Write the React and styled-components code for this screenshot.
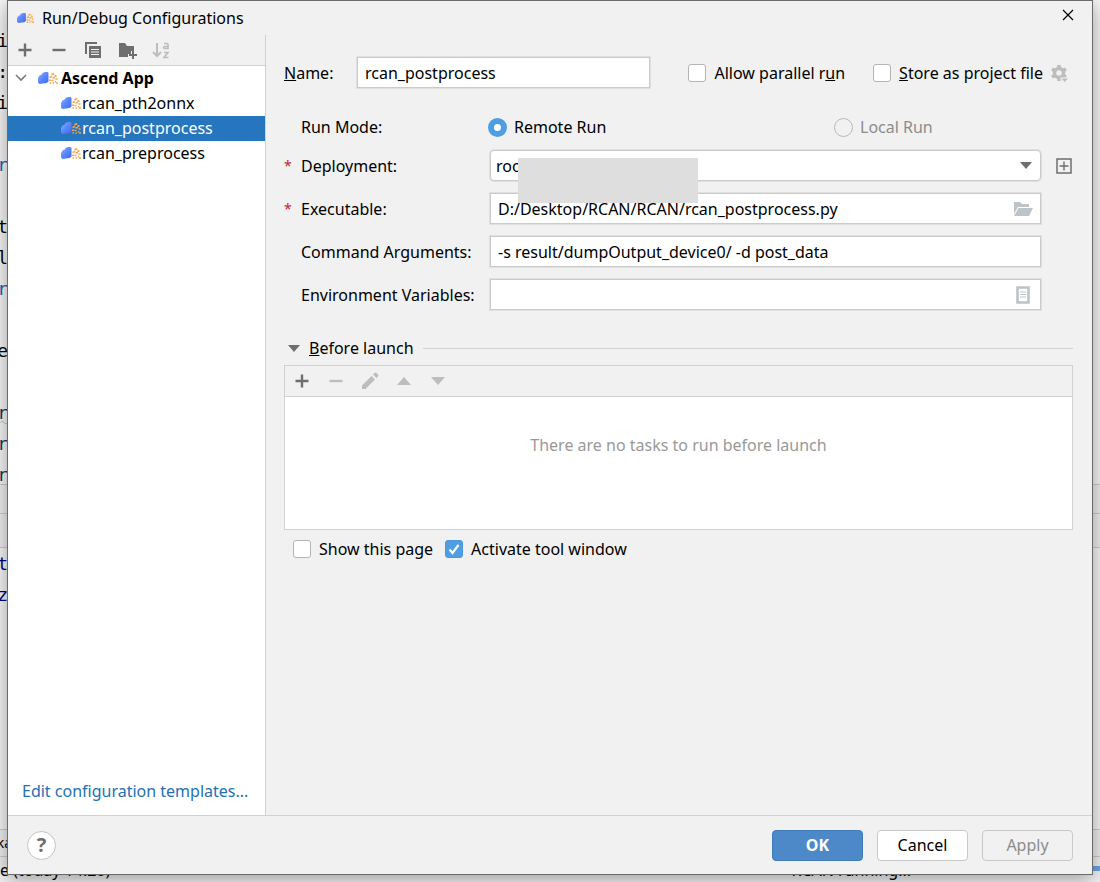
import React, { useState } from "react";
import styled, { createGlobalStyle, css } from "styled-components";

const GlobalStyle = createGlobalStyle`
  * {
    box-sizing: border-box;
  }

  body {
    margin: 0;
    background: #ffffff;
    color: #000000;
    font-family: "Noto Sans", "Open Sans", sans-serif;
    font-size: 16px;
    line-height: 22px;
  }

  button,
  input,
  select {
    font: inherit;
    color: inherit;
  }
`;

// Editor behind the dialog
const Page = styled.div`
  position: relative;
  display: flex;
  min-height: 100vh;
  padding: 0 7px 7px;
  overflow: hidden;
`;

const Backdrop = styled.div`
  position: absolute;
  inset: 0;
  display: flex;
  flex-direction: column;
  background: #fafafa;
  overflow: hidden;
`;

const CodeArea = styled.div`
  flex: none;
  height: ${(p) => p.$height}px;
  padding-top: ${(p) => p.$top || 0}px;
  overflow: hidden;
`;

const CodeLine = styled.div`
  display: flex;
  justify-content: flex-end;
  width: 8px;
  height: 31px;
  line-height: 31px;
  font-family: "DejaVu Sans Mono", monospace;
  font-size: 18px;
  color: ${(p) => p.$color};
  text-decoration: ${(p) => (p.$typo ? "underline wavy 1px #a5cfa5" : "none")};
`;

const Strip = styled.div`
  flex: none;
  height: ${(p) => p.$height}px;
  border-top: 1px solid #cfcfcf;
  background: #f2f2f2;
`;

const Filler = styled.div`
  flex: 1;
`;

const Crumb = styled.div`
  display: flex;
  justify-content: flex-end;
  width: 12px;
  font-size: 14px;
  line-height: 26px;
`;

const StatusBar = styled(Strip)`
  display: flex;
  line-height: 27px;
`;

const Progress = styled.span`
  width: 180px;
  height: 5px;
  margin: 9px 0 0 9px;
  background: #64a6e3;
`;

// Dialog frame
const Dialog = styled.div`
  position: relative;
  flex: 1;
  display: flex;
  flex-direction: column;
  border: 1px solid #6b6b6b;
  background: #f1f1f1;
  box-shadow: 0 3px 20px rgba(0, 0, 0, 0.4);
`;

const TitleBar = styled.header`
  display: flex;
  align-items: center;
  gap: 8px;
  height: 34px;
  padding: 0 16px 0 9px;
`;

const Title = styled.h1`
  flex: 1;
  margin: 0;
  font-size: 16px;
  font-weight: 400;
`;

const IconButton = styled.button`
  display: flex;
  align-items: center;
  justify-content: center;
  width: ${(p) => p.$width || 34}px;
  height: 30px;
  padding: 0;
  border: none;
  background: none;
  color: #6e6e6e;

  &:disabled {
    color: #bdbdbd;
  }
`;

const CloseButton = styled(IconButton)`
  align-self: flex-start;
  height: 28px;
`;

const EndButton = styled(IconButton)`
  justify-self: end;
`;

const Body = styled.div`
  flex: 1;
  display: flex;
`;

// Left side
const Sidebar = styled.aside`
  display: flex;
  flex-direction: column;
  width: 258px;
  border-right: 1px solid #d1d1d1;
  background: #ffffff;
`;

const Toolbar = styled.div`
  display: flex;
  align-items: center;
  height: 31px;
  border-bottom: 1px solid #d1d1d1;
  background: #f1f1f1;
`;

const Tree = styled.ul`
  flex: 1;
  margin: 0;
  padding: 0;
  list-style: none;
`;

const TreeItem = styled.li`
  display: flex;
  align-items: center;
  gap: ${(p) => (p.$root ? 3 : 1)}px;
  height: 25px;
  padding: 0 0 2px ${(p) => (p.$root ? 7 : 53)}px;
  font-weight: ${(p) => (p.$root ? 700 : 400)};
  ${(p) =>
    p.$selected &&
    css`
      background: #2675bf;
      color: #ffffff;
    `}
`;

const Chevron = styled.svg`
  margin-right: 8px;
`;

const TemplatesLink = styled.a`
  margin: 0 0 13px 14px;
  color: #2470b3;
  text-decoration: none;
`;

// Right side
const Content = styled.main`
  flex: 1;
  padding: 22px 19px 0 18px;
`;

const TopRow = styled.div`
  display: flex;
  align-items: center;
`;

const NameLabel = styled.label`
  width: 73px;
`;

const Spacer = styled.div`
  flex: 1;
`;

const TextInput = styled.input`
  width: ${(p) => p.$width || "100%"};
  height: 31px;
  padding: 0 7px;
  border: 1px solid #cbcbcb;
  box-shadow: 0 0 0 1px #e0e0e0;
  background: #ffffff;
  outline: none;
`;

const Check = styled.label`
  position: relative;
  display: flex;
  align-items: center;
  gap: 8px;
  margin-right: ${(p) => p.$after || 0}px;
`;

const CheckBox = styled.input`
  appearance: none;
  width: 18px;
  height: 18px;
  margin: 0;
  border: 1px solid #b4b4b4;
  border-radius: 3px;
  background: #ffffff;

  &:checked {
    border-color: #4a98dd;
    background: #4f9ee3;
  }
`;

const Tick = styled.svg`
  position: absolute;
  left: 3px;
  top: 5px;
  pointer-events: none;
`;

const Form = styled.div`
  display: grid;
  grid-template-columns: 17px 189px 1fr 32px;
  align-items: center;
  row-gap: 12px;
  margin-top: 28px;
`;

const Star = styled.span`
  color: #c7222d;
  font-size: 14px;
`;

const FormLabel = styled.label`
  grid-column: 2;
`;

const RadioRow = styled.div`
  display: grid;
  grid-template-columns: 346px 1fr;
  align-items: center;
`;

const RadioLabel = styled.label`
  display: flex;
  align-items: center;
  gap: 7px;
  color: ${(p) => (p.$off ? "#8c8c8c" : "#000000")};
`;

const Radio = styled.input`
  appearance: none;
  width: 19px;
  height: 19px;
  margin: 0 0 0 -2px;
  border: 1px solid #b9b9b9;
  border-radius: 50%;

  &:checked {
    border: 6px solid #4f9ee3;
    background: #ffffff;
  }
`;

const Field = styled.div`
  position: relative;
  display: flex;
  align-items: center;
`;

const FieldIcon = styled.span`
  position: absolute;
  right: ${(p) => p.$right}px;
  display: flex;
  color: #bdc3c7;
  pointer-events: none;
`;

const Select = styled.select`
  appearance: none;
  width: 100%;
  height: 31px;
  padding: 0 5px;
  border: 1px solid #cbcbcb;
  border-radius: 4px;
  box-shadow: 0 0 0 1px #e0e0e0;
  background: #ffffff;
  outline: none;
`;

const Mask = styled.div`
  position: absolute;
  z-index: 1;
  left: 28px;
  top: 8px;
  width: 180px;
  height: 45px;
  background: #dedede;
`;

const SectionHead = styled.div`
  display: flex;
  align-items: center;
  gap: 9px;
  margin-top: 27px;
  padding-left: 4px;
`;

const Rule = styled.div`
  flex: 1;
  height: 1px;
  background: #d1d1d1;
`;

const TaskPanel = styled.section`
  margin-top: 6px;
  border: 1px solid #d1d1d1;
`;

const EmptyTasks = styled.div`
  height: 132px;
  padding-top: 37px;
  background: #ffffff;
  color: #999999;
  text-align: center;
`;

const Options = styled.div`
  display: flex;
  margin-top: 8px;
  padding-left: 9px;
`;

const Footer = styled.footer`
  display: flex;
  align-items: center;
  gap: 14px;
  height: 59px;
  padding: 0 19px;
  border-top: 1px solid #d1d1d1;
`;

const HelpButton = styled.button`
  width: 29px;
  height: 29px;
  padding: 0;
  border: 1px solid #c4c4c4;
  border-radius: 50%;
  background: #ffffff;
  color: #6e6e6e;
  font-size: 20px;
  font-weight: 700;
  line-height: 26px;
`;

const DialogButton = styled.button`
  width: 91px;
  height: 31px;
  padding: 0;
  border: 1px solid #c8c8c8;
  border-radius: 4px;
  background: #ffffff;

  ${(p) =>
    p.$primary &&
    css`
      border-color: #4079b8;
      background: #4d89c9;
      color: #ffffff;
      font-weight: 700;
    `}

  &:disabled {
    background: #f1f1f1;
    color: #8c8c8c;
  }
`;

const AscendIcon = ({ width = 20 }) => (
  <svg width={width} height="12" viewBox="0 0 20 12">
    <defs>
      <linearGradient id="ascend" x1="0" y1="0" x2="1" y2="1">
        <stop offset="0" stopColor="#8fb0ff" />
        <stop offset="0.5" stopColor="#5a86fb" />
        <stop offset="1" stopColor="#3a6cf4" />
      </linearGradient>
    </defs>
    <path d="M0 10.500V6L1.500 3.500l2-.8L4.500 1l2.500-1H9.500l1 1v8.500l-2 1.500-7 1z" fill="url(#ascend)" />
    <path
      d="M13.500 3l2.500-1.500M16.500 3.500l2 1M11.500 5.500l2.500-1M14.500 6l2.500-.5M17.500 7h2M11 8.500l2-.5M13.500 8.500h2M11.500 11h1.500M14.500 11h1.500M17 9.500l1 .5M18 11h2"
      stroke="#f5a64c"
      strokeWidth="1.700"
      fill="none"
    />
  </svg>
);

const PlusIcon = () => (
  <svg width="14" height="14" viewBox="0 0 14 14">
    <path d="M7 .5v13M.5 7h13" stroke="currentColor" strokeWidth="2.400" />
  </svg>
);

const MinusIcon = () => (
  <svg width="14" height="14" viewBox="0 0 14 14">
    <path d="M.5 7h13" stroke="currentColor" strokeWidth="2.400" />
  </svg>
);

const CopyIcon = () => (
  <svg width="18" height="18" viewBox="0 0 18 18">
    <path d="M2 13V2h11" stroke="currentColor" strokeWidth="2" fill="none" />
    <path d="M5 5h12v12H5z" fill="currentColor" />
    <path d="M7 8.500h8M7 11h8M7 13.500h8" stroke="#f1f1f1" />
  </svg>
);

const FolderPlusIcon = () => (
  <svg width="20" height="18" viewBox="0 0 20 18">
    <path d="M2 2h6l2 3h7v5h-3v3h-3v3H2z" fill="currentColor" />
    <path d="M16 10v8M12 14h8" stroke="currentColor" strokeWidth="2" />
  </svg>
);

const SortIcon = () => (
  <svg width="18" height="18" viewBox="0 0 18 18" fill="none" stroke="currentColor">
    <path d="M5 2v13M1 11l4 4 4-4" strokeWidth="2" />
    <path d="M12 2.500h3q1 0 1 1v4h-3q-1.500 0-1.500-1t1.500-1h3M12 11.500h4l-4 5h4.500" strokeWidth="1.600" />
  </svg>
);

const PencilIcon = () => (
  <svg width="18" height="18" viewBox="0 0 18 18" fill="currentColor">
    <path d="M1 13.500L10.500 4 14 7.500 4.500 17H1zM12 2.500L13.500 1q1-.8 2 0L17 2.500q.8 1 0 2L15.500 6z" />
  </svg>
);

const Triangle = ({ up }) => (
  <svg width="14" height="8" viewBox="0 0 14 8">
    <path d={up ? "M0 8L7 0l7 8z" : "M0 0h14L7 8z"} fill="currentColor" />
  </svg>
);

const SmallArrow = () => (
  <svg width="12" height="7" viewBox="0 0 12 7">
    <path d="M0 0h12L6 7z" fill="#6e6e6e" />
  </svg>
);

const Gear = styled.svg`
  margin-right: 4px;
`;

const GearIcon = () => (
  <Gear width="18" height="20" viewBox="0 0 18 20">
    <circle cx="8" cy="10" r="4.500" fill="none" stroke="#bdbdbd" strokeWidth="3.500" />
    <path d="M8 2v3M8 15v3M1 6l2.600 1.500M12.400 12.500L15 14M1 14l2.600-1.500M12.400 7.500L15 6" stroke="#bdbdbd" strokeWidth="3.500" />
    <path d="M9.500 15H18l-4.200 4.500z" fill="#bdbdbd" stroke="#f1f1f1" />
  </Gear>
);

const codeLines = [
  ["i", "#000"], [":", "#000"], ["i", "#000"], ["", "#000"], ["r", "#1565c0"],
  ["", "#000"], ["t", "#000"], ["l", "#000"], ["r", "#1565c0"], ["", "#000"],
  ["e", "#000"], ["", "#000"], ["r", "#103a66", true], ["r", "#103a66"], ["r", "#103a66"],
];

const configs = ["rcan_pth2onnx", "rcan_postprocess", "rcan_preprocess"];

const App = () => {
  const [selected, setSelected] = useState("rcan_postprocess");
  const [name, setName] = useState("rcan_postprocess");
  const [executable, setExecutable] = useState("D:/Desktop/RCAN/RCAN/rcan_postprocess.py");
  const [args, setArgs] = useState("-s result/dumpOutput_device0/ -d post_data");
  const [env, setEnv] = useState("");
  const [activate, setActivate] = useState(true);

  return (
    <Page>
      <GlobalStyle />
      <Backdrop aria-hidden="true">
        <CodeArea $height={484} $top={25}>
          {codeLines.map(([text, color, typo], i) => (
            <CodeLine key={i} $color={color} $typo={typo}>{text}</CodeLine>
          ))}
        </CodeArea>
        <Strip $height={29} />
        <Strip $height={34} />
        <Strip $height={1} />
        <CodeArea $height={62}>
          <CodeLine $color="#000080">t</CodeLine>
          <CodeLine $color="#000080">z</CodeLine>
        </CodeArea>
        <Filler />
        <Strip $height={27}>
          <Crumb>ka</Crumb>
        </Strip>
        <StatusBar $height={26}>
          <span>e (today 14:20)</span>
          <Spacer />
          <span>RCAN running...</span>
          <Progress />
        </StatusBar>
      </Backdrop>

      <Dialog role="dialog" aria-label="Run/Debug Configurations">
        <TitleBar>
          <AscendIcon width={17} />
          <Title>Run/Debug Configurations</Title>
          <CloseButton $width={16} aria-label="Close">
            <svg width="12" height="12" viewBox="0 0 12 12">
              <path d="M1 1l10 10M11 1L1 11" stroke="#000" strokeWidth="1.200" />
            </svg>
          </CloseButton>
        </TitleBar>

        <Body>
          <Sidebar>
            <Toolbar>
              <IconButton aria-label="Add"><PlusIcon /></IconButton>
              <IconButton aria-label="Remove"><MinusIcon /></IconButton>
              <IconButton aria-label="Copy"><CopyIcon /></IconButton>
              <IconButton aria-label="New folder"><FolderPlusIcon /></IconButton>
              <IconButton aria-label="Sort" disabled><SortIcon /></IconButton>
            </Toolbar>
            <Tree>
              <TreeItem $root>
                <Chevron width="12" height="8" viewBox="0 0 12 8">
                  <path d="M1 1l5 5 5-5" stroke="#7a7a7a" strokeWidth="1.600" fill="none" />
                </Chevron>
                <AscendIcon />
                Ascend App
              </TreeItem>
              {configs.map((item) => (
                <TreeItem
                  key={item}
                  $selected={item === selected}
                  onClick={() => setSelected(item)}
                >
                  <AscendIcon />
                  {item}
                </TreeItem>
              ))}
            </Tree>
            <TemplatesLink href="#templates">Edit configuration templates...</TemplatesLink>
          </Sidebar>

          <Content>
            <TopRow>
              <NameLabel htmlFor="name"><u>N</u>ame:</NameLabel>
              <TextInput id="name" $width="293px" value={name} onChange={(e) => setName(e.target.value)} />
              <Spacer />
              <Check $after={28}>
                <CheckBox type="checkbox" />
                <span>Allow parallel r<u>u</u>n</span>
              </Check>
              <Check $after={8}>
                <CheckBox type="checkbox" />
                <span><u>S</u>tore as project file</span>
              </Check>
              <GearIcon />
            </TopRow>

            <Form>
              <FormLabel as="span">Run Mode:</FormLabel>
              <RadioRow>
                <RadioLabel>
                  <Radio type="radio" name="mode" defaultChecked />
                  Remote Run
                </RadioLabel>
                <RadioLabel $off>
                  <Radio type="radio" name="mode" disabled />
                  Local Run
                </RadioLabel>
              </RadioRow>
              <span />

              <Star>*</Star>
              <FormLabel htmlFor="deployment">Deployment:</FormLabel>
              <Field>
                <Select id="deployment">
                  <option>root</option>
                </Select>
                <Mask />
                <FieldIcon $right={9}>
                  <SmallArrow />
                </FieldIcon>
              </Field>
              <EndButton $width={18} aria-label="Add deployment">
                <svg width="16" height="16" viewBox="0 0 16 16" fill="none" stroke="currentColor">
                  <path d="M1 1h14v14H1z" strokeWidth="1.500" />
                  <path d="M8 3.500v9M3.500 8h9" strokeWidth="1.400" />
                </svg>
              </EndButton>

              <Star>*</Star>
              <FormLabel htmlFor="executable">Executable:</FormLabel>
              <Field>
                <TextInput id="executable" value={executable} onChange={(e) => setExecutable(e.target.value)} />
                <FieldIcon $right={8}>
                  <svg width="20" height="14" viewBox="0 0 20 14" fill="currentColor">
                    <path d="M1 12V0h6l2 2h7v3H5z" />
                    <path d="M5.500 6H20l-4 8H1z" />
                  </svg>
                </FieldIcon>
              </Field>
              <span />

              <FormLabel htmlFor="args">Command Arguments:</FormLabel>
              <TextInput id="args" value={args} onChange={(e) => setArgs(e.target.value)} />
              <span />

              <FormLabel htmlFor="env">Environment Variables:</FormLabel>
              <Field>
                <TextInput id="env" value={env} onChange={(e) => setEnv(e.target.value)} />
                <FieldIcon $right={11}>
                  <svg width="14" height="18" viewBox="0 0 14 18" fill="none" stroke="currentColor">
                    <path d="M1.500 1.500h11v15h-11z" strokeWidth="2.600" />
                    <path d="M4 6h6M4 8.500h6M4 11h6" strokeWidth="1.200" />
                  </svg>
                </FieldIcon>
              </Field>
            </Form>

            <SectionHead>
              <SmallArrow />
              <span><u>B</u>efore launch</span>
              <Rule />
            </SectionHead>

            <TaskPanel>
              <Toolbar>
                <IconButton aria-label="Add task"><PlusIcon /></IconButton>
                <IconButton aria-label="Remove task" disabled><MinusIcon /></IconButton>
                <IconButton aria-label="Edit task" disabled><PencilIcon /></IconButton>
                <IconButton aria-label="Move up" disabled><Triangle up /></IconButton>
                <IconButton aria-label="Move down" disabled><Triangle /></IconButton>
              </Toolbar>
              <EmptyTasks>There are no tasks to run before launch</EmptyTasks>
            </TaskPanel>

            <Options>
              <Check $after={12}>
                <CheckBox type="checkbox" />
                Show this page
              </Check>
              <Check>
                <CheckBox type="checkbox" checked={activate} onChange={() => setActivate(!activate)} />
                {activate && (
                  <Tick width="12" height="12" viewBox="0 0 12 12">
                    <path d="M1.500 6.500l3 3.500L10.500 2" stroke="#fff" strokeWidth="2.200" fill="none" />
                  </Tick>
                )}
                Activate tool window
              </Check>
            </Options>
          </Content>
        </Body>

        <Footer>
          <HelpButton aria-label="Help">?</HelpButton>
          <Spacer />
          <DialogButton $primary>OK</DialogButton>
          <DialogButton>Cancel</DialogButton>
          <DialogButton disabled>Apply</DialogButton>
        </Footer>
      </Dialog>
    </Page>
  );
};

export default App;
